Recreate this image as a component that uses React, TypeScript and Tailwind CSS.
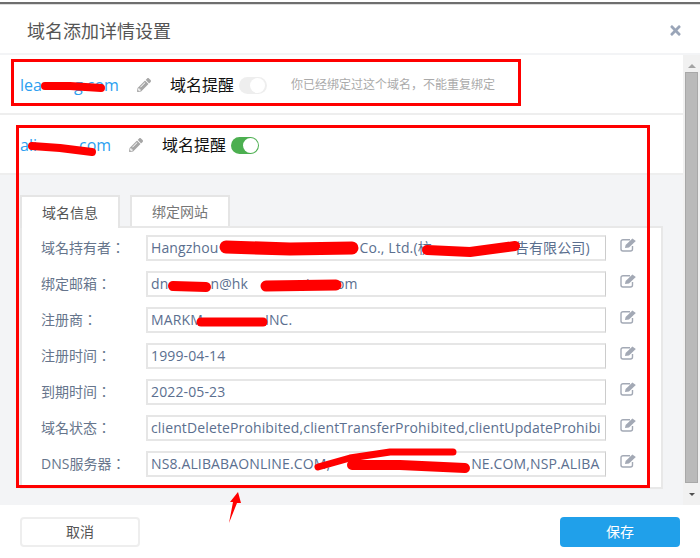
import { FaPencilAlt, FaTimes } from "react-icons/fa";

const font = "font-['Open_Sans','Noto_Sans_CJK_SC',sans-serif]";

function Gap({ w }: { w: number }) {
  return <span className="inline-block" style={{ width: w }} />;
}

function EditIcon() {
  return (
    <svg className="ml-[14px] -translate-y-[3px] shrink-0 text-[#a3a9b5]" width={17} height={14} viewBox="0 0 17 14" fill="none">
      <path d="M10 1.7H3A2 2 0 0 0 1 3.7V11A2 2 0 0 0 3 13H10.5A2 2 0 0 0 12.5 11V8" stroke="currentColor" strokeWidth={1.4} />
      <path d="M5 10L5.6 7L12.4 0.4L15.8 3L9 9.6Z" fill="currentColor" />
    </svg>
  );
}

function DomainRow({ head, tail, gap, on, note }: { head: string; tail: string; gap: number; on: boolean; note?: string }) {
  return (
    <div className="flex h-[60px] items-center border-b-2 border-[#eeeeee] bg-white pl-5 pt-[2px]">
      <a className="whitespace-nowrap text-base text-[#2c9ff0]">
        {head}
        <Gap w={gap} />
        {tail}
      </a>
      <FaPencilAlt className="ml-[18px] text-[14px] text-[#a6a6a6]" />
      <span className="ml-[19px] text-base text-[#111111]">域名提醒</span>
      <span
        className={
          on
            ? "ml-[5px] flex h-[17px] w-[28px] items-center justify-end rounded-full bg-[#4caf50] pr-px"
            : "ml-[5px] flex h-[17px] w-[28px] items-center justify-end rounded-full bg-[#eeeeee] pr-[2px]"
        }
      >
        <span className="h-[15px] w-[15px] rounded-full bg-white" />
      </span>
      {note && <span className="ml-6 text-xs text-[#aaaaaa]">{note}</span>}
    </div>
  );
}

function FormRow({ label, children }: { label: string; children: React.ReactNode }) {
  return (
    <div className="flex h-[26px] items-center">
      <label className="w-[124px] shrink-0 pl-[19px] font-['Open_Sans','Noto_Sans_CJK_TC',sans-serif] text-sm text-[#66758c]">{label}</label>
      <div className="flex h-[26px] w-[460px] items-center overflow-hidden whitespace-nowrap border-2 border-r border-[#e6e6e6] border-r-[#cccccc] bg-white pl-[3px] text-sm tracking-[0.13px] text-[#5b6f8f]">
        {children}
      </div>
      <EditIcon />
    </div>
  );
}

export default function App() {
  return (
    <div className={`relative h-[558px] w-[700px] overflow-hidden bg-white ${font}`}>
      {/* window edge from the page behind */}
      <div className="h-[2px] bg-white" />
      <div className="h-[2px] bg-[#6e6e6e]" />
      <div className="h-px bg-[#dddddd]" />

      <header className="flex h-[48px] items-center justify-between pl-[27px] pr-[17px] pt-[3px]">
        <h1 className="text-lg text-[#555555]">域名添加详情设置</h1>
        <FaTimes className="text-[15px] text-[#9aa5b8]" />
      </header>
      <div className="h-[2px] bg-[#f3f4f6]" />

      <div className="flex h-[450px]">
        <div className="h-full w-[683px] overflow-hidden bg-[#f3f4f6]">
          <DomainRow head="lea" tail="g.com" gap={32} on={false} note="你已经绑定过这个域名，不能重复绑定" />
          <DomainRow head="ali" tail="com" gap={42} on />

          <div className="pl-5 pt-5">
            <div className="relative z-10 flex gap-[10px]">
              <div className="-mb-[2px] flex h-[33px] w-[100px] items-center justify-center border-2 border-b-0 border-[#e5e5e5] bg-white text-sm text-[#555555]">
                域名信息
              </div>
              <div className="flex h-[31px] w-[100px] items-center justify-center border-2 border-b-0 border-[#e5e5e5] bg-white text-sm text-[#777777]">
                绑定网站
              </div>
            </div>
            <div className="flex h-[263px] w-[643px] flex-col gap-[10px] border-2 border-[#e8e8e8] bg-white pt-[7px]">
              <FormRow label="域名持有者：">
                Hangzhou
                <Gap w={141} />
                Co., Ltd.(杭
                <Gap w={83} />
                告有限公司)
              </FormRow>
              <FormRow label="绑定邮箱：">
                dn
                <Gap w={42} />
                n@hk
                <Gap w={58} />
                inc.com
              </FormRow>
              <FormRow label="注册商：">
                MARKM
                <Gap w={62} />
                INC.
              </FormRow>
              <FormRow label="注册时间：">1999-04-14</FormRow>
              <FormRow label="到期时间：">2022-05-23</FormRow>
              <FormRow label="域名状态：">clientDeleteProhibited,clientTransferProhibited,clientUpdateProhibi</FormRow>
              <FormRow label="DNS服务器：">
                NS8.ALIBABAONLINE.COM,
                <Gap w={141} />
                NE.COM,NSP.ALIBA
              </FormRow>
            </div>
          </div>
        </div>

        {/* scrollbar */}
        <div className="flex h-full w-[17px] flex-col items-center bg-[#f1f1f1]">
          <div className="flex h-[17px] items-center pt-1">
            <span className="h-0 w-0 border-x-[4px] border-b-[4px] border-x-transparent border-b-[#a3a3a3]" />
          </div>
          <div className="h-[411px] w-[13px] border border-[#a8a8a8] bg-[#bababa]" />
          <div className="flex h-[22px] items-center">
            <span className="h-0 w-0 border-x-[3px] border-t-[3px] border-x-transparent border-t-[#505050]" />
          </div>
        </div>
      </div>

      <footer className="flex h-[53px] items-center justify-between px-5">
        <button className="h-[30px] w-[120px] rounded-sm border-2 border-[#eeeeee] bg-white text-sm text-[#555555]">取消</button>
        <button className="h-[30px] w-[120px] rounded-sm bg-[#20a0ea] text-sm text-white">保存</button>
      </footer>

      {/* hand-drawn annotations on top of the screenshot */}
      <div className="absolute left-[11px] top-[59px] h-[47px] w-[510px] border-[3px] border-[#ff0000]" />
      <div className="absolute left-[16px] top-[125px] h-[363px] w-[634px] border-[3px] border-[#ff0000]" />
      <svg className="absolute inset-0" width={700} height={558} viewBox="0 0 700 558" fill="none" stroke="#ff0000" strokeLinecap="round" strokeLinejoin="round">
        <path d="M45 86 L70 86 L101 88" strokeWidth={8} />
        <path d="M32 146 L60 148 L92 152" strokeWidth={8} />
        <path d="M226 247 L290 249 L352 248" strokeWidth={13} />
        <path d="M427 250 L470 252 L515 246" strokeWidth={10} />
        <path d="M173 286 L206 287" strokeWidth={10} />
        <path d="M266 286 L336 285" strokeWidth={11} />
        <path d="M201 322 L263 322" strokeWidth={9} />
        <path d="M318 467 L350 458 L390 452 L453 452" strokeWidth={7} />
        <path d="M352 465 L400 465 L465 468" strokeWidth={10} />
        <polygon points="238,492 241,503 237,503 229,523 233,502 230,502" fill="#ff0000" stroke="none" />
      </svg>
    </div>
  );
}
